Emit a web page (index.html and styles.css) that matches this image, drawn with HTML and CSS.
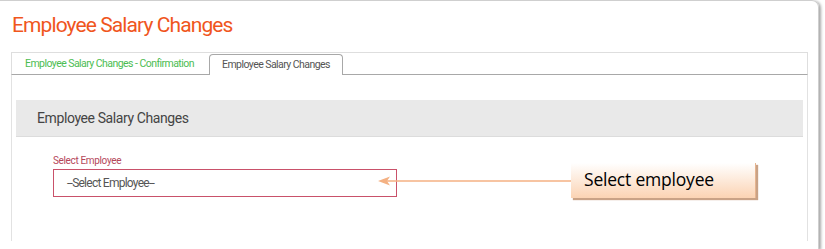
FILE: index.html
```html
<!DOCTYPE html>
<html lang="en">
<head>
  <meta charset="UTF-8" />
  <title>Employee Salary Changes</title>
  <link rel="stylesheet" href="styles.css">
</head>
<body>
  <div class="page">
    <h1 class="page-title">Employee Salary Changes</h1>
    <div class="tabs">
      <div class="tab-list">
        <a class="tab">Employee Salary Changes - Confirmation</a>
        <a class="tab active">Employee Salary Changes</a>
      </div>
      <div class="tab-body">
        <div class="section-head">Employee Salary Changes</div>
        <div class="form-row">
          <label class="field-label">Select Employee</label>
          <div class="select-box">--Select Employee--</div>
          <div class="callout">
            <svg class="callout-arrow" width="193" height="10" viewBox="0 0 193 10">
              <line x1="8" y1="5" x2="193" y2="5" stroke="#f4b183" stroke-width="1.5"/>
              <path d="M0 5 L12 0.5 L9 5 L12 9.5 Z" fill="#f4b183"/>
            </svg>
            <div class="callout-box">Select employee</div>
          </div>
        </div>
      </div>
    </div>
  </div>
</body>
</html>
```

FILE: styles.css
```css
body {
  margin: 0;
  font-family: Roboto, 'Liberation Sans', sans-serif;
  background: #fff;
  overflow: hidden;
}

.page {
  width: 820px;
  height: 249px;
  margin-left: -1px;
  border: 1px solid #cfcfcf;
  border-bottom: none;
  border-radius: 0 7px 0 0;
  box-shadow: 2px 1px 3px rgba(0, 0, 0, 0.35);
  box-sizing: border-box;
  padding: 10px 0 0 12px;
  overflow: hidden;
}

.page-title {
  margin: 0;
  font-size: 21px;
  font-weight: 400;
  line-height: 28px;
  color: #f0561d;
  letter-spacing: -0.9px;
}

.tabs {
  margin-top: 13px;
  width: 797px;
  margin-left: -1px;
}

.tab-list {
  display: flex;
  align-items: flex-end;
  height: 21px;
  border: 1px solid #dedede;
  border-bottom: 1px solid #a8a8a8;
}

.tab {
  font-size: 10.5px;
  color: #4cbd52;
  padding: 0 0 0 13px;
  line-height: 20px;
  width: 184px;
  white-space: nowrap;
  letter-spacing: -0.55px;
}

.tab.active {
  width: auto;
  color: #555;
  background: #fff;
  border: 1px solid #a8a8a8;
  border-bottom: none;
  border-radius: 4px 4px 0 0;
  margin-bottom: -1px;
  line-height: 20px;
  padding: 0 12px 0 12px;
}

.tab-body {
  height: 166px;
  box-sizing: border-box;
  border: 1px solid #e2e2e2;
  border-top: none;
  border-bottom: none;
  padding: 25px 4px 0 4px;
}

.section-head {
  background: #e9e9e9;
  border-bottom: 1px solid #dcdcdc;
  height: 36px;
  line-height: 36px;
  padding-left: 21px;
  font-size: 14px;
  color: #444;
  letter-spacing: -0.4px;
}

.form-row {
  position: relative;
  padding: 18px 0 0 37px;
}

.field-label {
  display: block;
  font-size: 10px;
  color: #b5475a;
  line-height: 12px;
  margin-bottom: 2px;
  letter-spacing: -0.35px;
}

.select-box {
  height: 26px;
  border: 1px solid #c9516a;
  font-size: 12px;
  line-height: 26px;
  color: #555;
  padding-left: 13px;
  width: 329px;
  letter-spacing: -0.75px;
}

.callout {
  position: absolute;
  left: 362px;
  top: 26px;
  display: flex;
  align-items: center;
}

.callout-arrow {
  display: block;
}

.callout-box {
  width: 185px;
  height: 35px;
  line-height: 33px;
  box-sizing: border-box;
  padding-left: 13px;
  font-family: 'Open Sans', 'Liberation Sans', sans-serif;
  font-size: 17.5px;
  color: #000;
  background: linear-gradient(#fff, #fbd3b3);
  border-right: 1px solid #e6b48f;
  box-shadow: 2px 2px 1px #c9a286;
  letter-spacing: -0.2px;
}
```
